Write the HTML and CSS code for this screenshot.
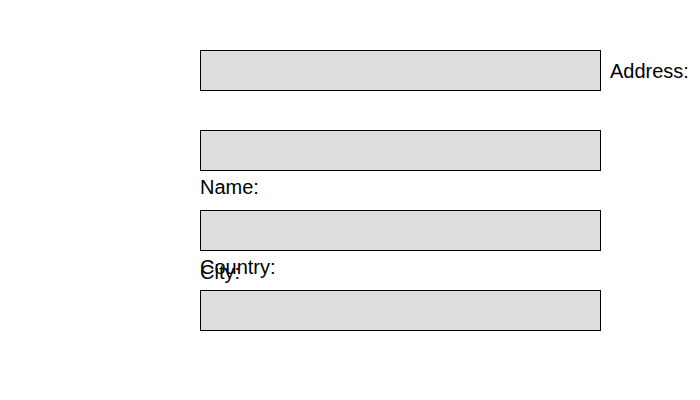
FILE: index.html
```html
<!DOCTYPE html>
<html>
<head>
<meta charset="utf-8">
<link rel="stylesheet" href="styles.css">
</head>
<body>
<form class="form">
  <div class="field input-address"></div>
  <label class="label label-address">Address:</label>
  <div class="field input-name"></div>
  <label class="label label-name">Name:</label>
  <div class="field input-city"></div>
  <label class="label label-country">Country:</label>
  <label class="label label-city">City:</label>
  <div class="field input-country"></div>
</form>
</body>
</html>
```
FILE: styles.css
```css
html, body {
  margin: 0;
  padding: 0;
  background: #fff;
}
.form {
  display: grid;
  grid-template-columns: 401px auto;
  grid-template-rows: 41px 39px 41px 39px 41px 39px 41px;
  column-gap: 9px;
  padding: 50px 0 0 200px;
  font-family: "Liberation Sans", Arial, sans-serif;
  font-size: 20px;
  color: #000;
}
.field {
  box-sizing: border-box;
  border: 1px solid #000;
  background: #dddddd;
  height: 41px;
}
.label {
  line-height: 23px;
  white-space: nowrap;
  align-self: start;
}
.input-address { grid-column: 1; grid-row: 1; }
.label-address { grid-column: 2; grid-row: 1; margin-top: 10px; }
.input-name { grid-column: 1; grid-row: 3; }
.label-name { grid-column: 1; grid-row: 4; margin-top: 5px; }
.input-city { grid-column: 1; grid-row: 5; }
.label-country { grid-column: 1; grid-row: 6; margin-top: 5px; }
.label-city { grid-column: 1; grid-row: 6; margin-top: 10px; }
.input-country { grid-column: 1; grid-row: 7; }
```
